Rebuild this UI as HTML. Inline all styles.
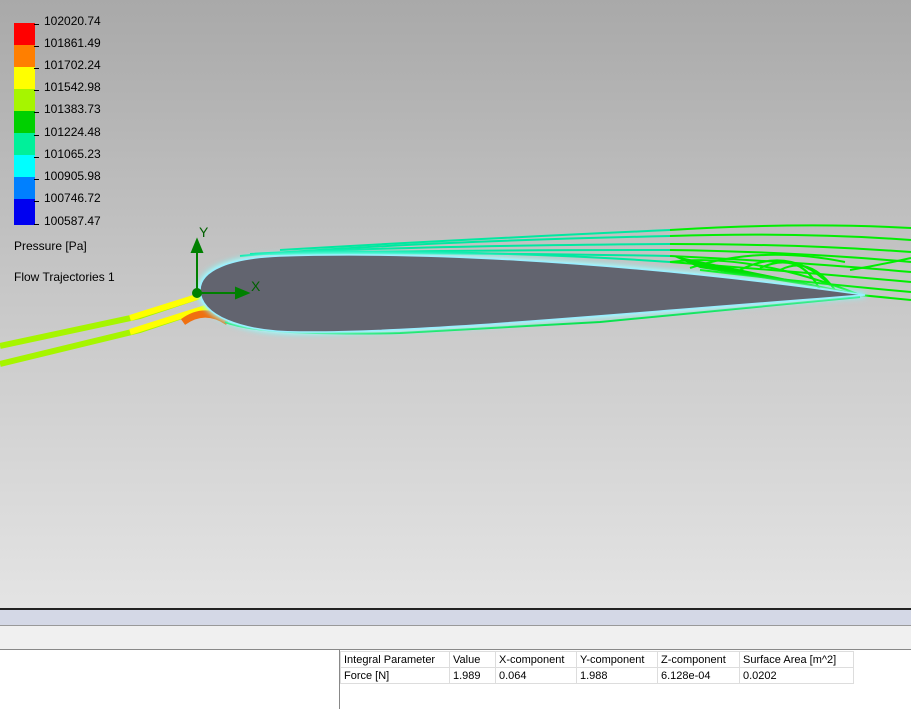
<!DOCTYPE html>
<html><head><meta charset="utf-8"><style>
body{margin:0;width:911px;height:709px;overflow:hidden;font-family:"Liberation Sans",sans-serif;}
#v{position:absolute;left:0;top:0;width:911px;height:609px;background:linear-gradient(#a9a9a9 0px,#c8c8c8 300px,#e4e4e4 609px);}
.lg{position:absolute;left:14px;width:21px;height:22px}
.lb{position:absolute;left:36px;font-size:12px;color:#000}
.lb:before{content:"";position:absolute;left:-2px;top:10px;width:5px;border-top:1px solid #000}
.lb span{margin-left:8px}
table{border-collapse:collapse;font-size:11px;font-family:"Liberation Sans",sans-serif}
td{border:1px solid #ddd;padding:1px 3px;height:13px;white-space:nowrap}
</style></head><body>
<div id="v"></div>
<div class="lg" style="top:23px;background:#f00"></div>
<div class="lg" style="top:45px;background:#ff7f00"></div>
<div class="lg" style="top:67px;background:#ffff00"></div>
<div class="lg" style="top:89px;background:#a6f500"></div>
<div class="lg" style="top:111px;background:#00d000"></div>
<div class="lg" style="top:133px;background:#00f09a"></div>
<div class="lg" style="top:155px;background:#00ffff"></div>
<div class="lg" style="top:177px;background:#0080ff"></div>
<div class="lg" style="top:199px;background:#0000f0;height:26px"></div>
<div class="lb" style="top:14px"><span>102020.74</span></div>
<div class="lb" style="top:36px"><span>101861.49</span></div>
<div class="lb" style="top:58px"><span>101702.24</span></div>
<div class="lb" style="top:80px"><span>101542.98</span></div>
<div class="lb" style="top:102px"><span>101383.73</span></div>
<div class="lb" style="top:125px"><span>101224.48</span></div>
<div class="lb" style="top:147px"><span>101065.23</span></div>
<div class="lb" style="top:169px"><span>100905.98</span></div>
<div class="lb" style="top:191px"><span>100746.72</span></div>
<div class="lb" style="top:214px"><span>100587.47</span></div>
<div style="position:absolute;left:14px;top:239px;font-size:12px">Pressure [Pa]</div>
<div style="position:absolute;left:14px;top:270px;font-size:12px">Flow Trajectories 1</div>
<svg style="position:absolute;left:0;top:0" width="911" height="609">
<defs><filter id="b"><feGaussianBlur stdDeviation="3"/></filter></defs>
<g fill="none" stroke-width="6">
<path d="M0,346 L140,316 L200,296" stroke="#a6f500"/>
<path d="M0,364 L140,330 L215,305" stroke="#a6f500"/>
<path d="M130,318 L200,296" stroke="#ffff00"/>
<path d="M130,332 L215,305" stroke="#ffff00"/>
</g>
<path d="M183,322 Q205,306 228,322" stroke="#f07010" stroke-width="7" fill="none"/>
<path d="M225,322 Q260,336 400,333 L600,322 L860,297" stroke="#00e040" stroke-width="2" fill="none"/>
<g fill="none" stroke-width="2" stroke="#00e8a0">
<path d="M240,256 Q400,242 670,236"/><path d="M250,254 Q400,246 670,244"/><path d="M260,254 Q420,250 670,250"/><path d="M270,254 Q450,252 670,256"/><path d="M300,252 Q500,250 670,262"/><path d="M280,250 Q450,240 670,230"/>
</g>
<g fill="none" stroke-width="2" stroke="#00ee00">
<path d="M670,230 Q800,222 911,228"/><path d="M670,236 Q800,232 911,240"/><path d="M670,244 Q800,244 911,252"/><path d="M670,250 Q800,252 911,262"/><path d="M670,256 Q800,262 911,272"/><path d="M670,262 Q800,272 911,282"/><path d="M700,270 Q800,282 911,292"/>
<path d="M670,262 Q750,252 860,295"/><path d="M690,268 Q760,245 845,262"/><path d="M740,270 Q790,245 830,285"/><path d="M760,268 Q800,250 820,290"/><path d="M780,270 Q810,255 835,290"/><path d="M700,280 Q800,290 860,296"/><path d="M860,295 L911,300"/><path d="M850,270 Q880,265 911,258"/>
</g>
<path d="M670,255 L860,294 L700,268 Z" fill="#00e000"/>
<path d="M200,290 C200,270 230,258 280,256 C400,252 600,258 865,295 C600,315 420,333 300,332 C240,332 200,315 200,290 Z" fill="#fff" stroke="#7ff" stroke-width="4" filter="url(#b)"/>
<path d="M200,290 C200,270 230,258 280,256 C400,252 600,258 865,295 C600,315 420,333 300,332 C240,332 200,315 200,290 Z" fill="#62646f" stroke="#9ef" stroke-width="1.5"/>
<g stroke="#008000" fill="#008000" stroke-width="2">
<line x1="197" y1="292" x2="197" y2="250"/><polygon points="192,252 197,240 202,252"/>
<line x1="197" y1="293" x2="238" y2="293"/><polygon points="236,288 248,293 236,298"/>
<circle cx="197" cy="293" r="4"/>
</g>
<text x="199" y="237" font-size="14" fill="#006000" font-family="Liberation Sans">Y</text>
<text x="251" y="291" font-size="14" fill="#006000" font-family="Liberation Sans">X</text>
</svg>
<div style="position:absolute;left:0;top:608px;width:911px;height:2px;background:#222"></div>
<div style="position:absolute;left:0;top:610px;width:911px;height:15px;background:#d4d8e6;border-bottom:1px solid #999"></div>
<div style="position:absolute;left:0;top:626px;width:911px;height:23px;background:#f0f0f0;border-bottom:1px solid #888"></div>
<div style="position:absolute;left:0;top:650px;width:911px;height:59px;background:#fff"></div>
<div style="position:absolute;left:339px;top:650px;width:1px;height:59px;background:#888"></div>
<table style="position:absolute;left:340px;top:651px">
<tr><td style="width:102px">Integral Parameter</td><td style="width:39px">Value</td><td style="width:74px">X-component</td><td style="width:74px">Y-component</td><td style="width:75px">Z-component</td><td style="width:107px">Surface Area [m^2]</td></tr>
<tr><td>Force [N]</td><td>1.989</td><td>0.064</td><td>1.988</td><td>6.128e-04</td><td>0.0202</td></tr>
</table>
</body></html>
